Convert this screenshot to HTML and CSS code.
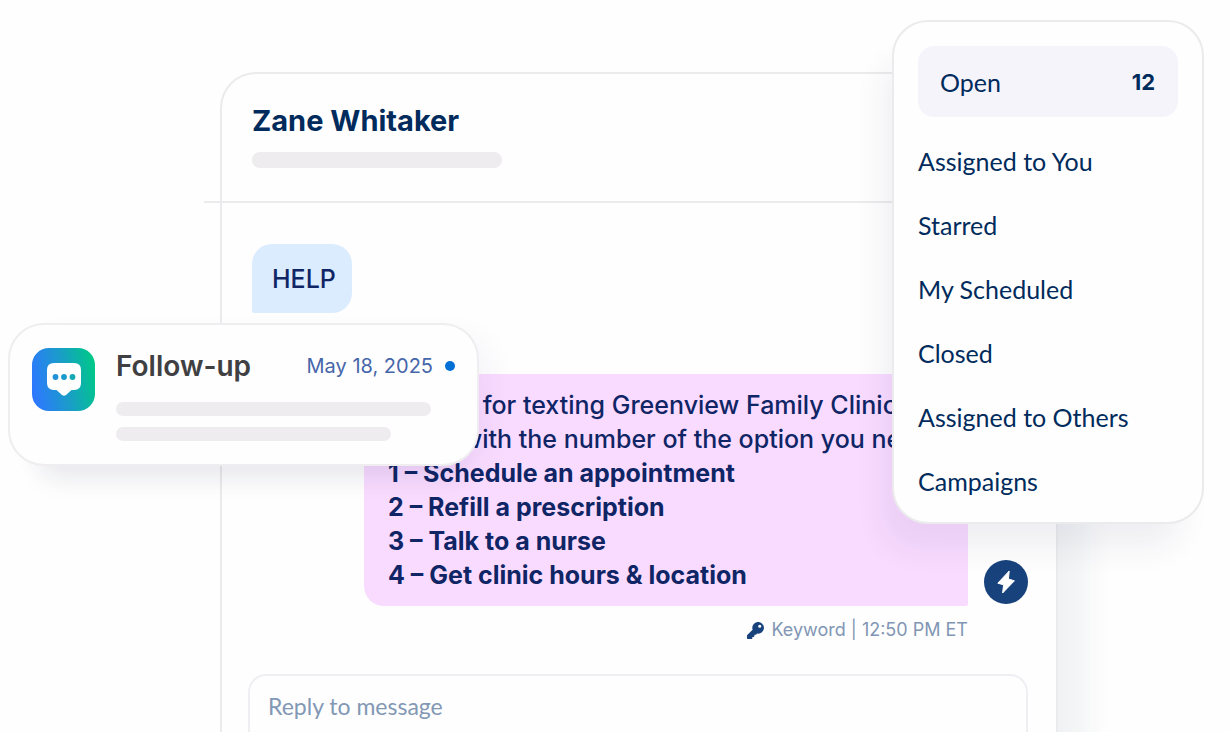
FILE: index.html
```html
<!DOCTYPE html>
<html lang="en">
<head>
    <meta charset="UTF-8">
    <meta name="viewport" content="width=device-width, initial-scale=1.0">
    <title>Zane Whitaker - Inbox</title>
    <link rel="stylesheet" href="styles.css">
</head>
<body>
    <div class="stage">
        <main class="chat">
            <header class="chat-header">
                <h1 class="chat-name">Zane Whitaker</h1>
                <div class="placeholder"></div>
            </header>

            <section class="messages">
                <p class="bubble incoming">HELP</p>

                <div class="outgoing-row">
                    <div class="bubble outgoing">
                        <p>Thanks for texting Greenview Family Clinic!</p>
                        <p>Reply with the number of the option you need:</p>
                        <p class="option">1 – Schedule an appointment</p>
                        <p class="option">2 – Refill a prescription</p>
                        <p class="option">3 – Talk to a nurse</p>
                        <p class="option">4 – Get clinic hours &amp; location</p>
                    </div>
                    <div class="avatar">
                        <svg viewBox="0 0 44 44" width="44" height="44" aria-hidden="true">
                            <path d="M25.2 11 L13.8 23.2 L19.6 24.8 L18.6 33 L30.4 20.8 L24.4 19 Z" fill="#fff" stroke="#fff" stroke-width="1" stroke-linejoin="round"/>
                        </svg>
                    </div>
                </div>

                <div class="meta">
                    <svg viewBox="0 0 512 512" width="17" height="17" aria-hidden="true">
                        <path fill="#18427c" d="M512 176a176 176 0 0 1-209 173l-24 27a24 24 0 0 1-18 8h-37v40a24 24 0 0 1-24 24h-40v40a24 24 0 0 1-24 24H24a24 24 0 0 1-24-24v-78c0-6 3-12 7-17l162-162A176 176 0 1 1 512 176zM336 128a48 48 0 1 0 96 0 48 48 0 1 0-96 0z"/>
                    </svg>
                    <span>Keyword | 12:50 PM ET</span>
                </div>
            </section>

            <textarea class="reply" placeholder="Reply to message" aria-label="Reply to message"></textarea>
        </main>

        <aside class="notice">
            <svg class="notice-icon" viewBox="0 0 63 63" width="63" height="63" aria-hidden="true">
                <defs>
                    <linearGradient id="brand" x1="0" y1="0.6" x2="1" y2="0.4">
                        <stop offset="0" stop-color="#2d78ff"/>
                        <stop offset="0.5" stop-color="#1b9bcb"/>
                        <stop offset="1" stop-color="#00c78a"/>
                    </linearGradient>
                </defs>
                <rect width="63" height="63" rx="17" fill="url(#brand)"/>
                <path d="M22 15 H42 Q49 15 49 22 V35 Q49 42 42 42 H39.5 L34 47 Q32 48.6 30 47 L24.5 42 H22 Q15 42 15 35 V22 Q15 15 22 15 Z" fill="#fff"/>
                <circle cx="23.5" cy="29" r="2.9" fill="#2191d8"/>
                <circle cx="32" cy="29" r="2.9" fill="#1b9bcb"/>
                <circle cx="40.5" cy="29" r="2.9" fill="#12a9b4"/>
            </svg>
            <div class="notice-body">
                <div class="notice-top">
                    <h2 class="notice-title">Follow-up</h2>
                    <time class="notice-date" datetime="2025-05-18">May 18, 2025</time>
                    <span class="dot"></span>
                </div>
                <div class="line line-long"></div>
                <div class="line line-short"></div>
            </div>
        </aside>

        <nav class="menu">
            <a href="#" class="menu-item active">Open <span class="count">12</span></a>
            <a href="#" class="menu-item">Assigned to You</a>
            <a href="#" class="menu-item">Starred</a>
            <a href="#" class="menu-item">My Scheduled</a>
            <a href="#" class="menu-item">Closed</a>
            <a href="#" class="menu-item">Assigned to Others</a>
            <a href="#" class="menu-item">Campaigns</a>
        </nav>
    </div>
</body>
</html>
```
FILE: styles.css
```css
* {
    box-sizing: border-box;
}

body {
    margin: 0;
    background-color: #fefefe;
    color: #0f2565;
    font-family: Inter, "Open Sans", sans-serif;
}

h1, h2, p {
    margin: 0;
}

.stage {
    position: relative;
    display: flex;
    flex-direction: column;
    min-height: 100vh;
    padding: 72px 172px 0 220px;
    overflow: hidden;
}

/* Conversation */
.chat {
    flex: 1;
    display: flex;
    flex-direction: column;
    min-width: 0;
    border: 2px solid #ebeaec;
    border-bottom: none;
    border-radius: 36px 36px 0 0;
    background-color: #fefefe;
    box-shadow: 28px 40px 32px rgba(20, 50, 60, 0.06);
}

.chat-header {
    margin-left: -18px;
    padding: 29px 48px 33px;
    border-bottom: 2px solid #ebeaec;
}

.chat-name {
    margin-bottom: 13px;
    color: #002b5c;
    font-size: 29px;
    font-weight: 700;
    line-height: 36px;
}

.placeholder {
    width: 250px;
    height: 16px;
    border-radius: 8px;
    background-color: #eeecef;
}

.messages {
    display: flex;
    flex-direction: column;
    padding: 41px 28px 32px 30px;
}

.bubble {
    font-size: 25px;
    font-weight: 500;
    line-height: 34px;
}

.incoming {
    align-self: flex-start;
    padding: 18px 16px 17px 20px;
    border-radius: 20px 20px 20px 2px;
    background-color: #dcecff;
}

.outgoing-row {
    display: flex;
    align-items: flex-end;
    gap: 16px;
    margin: 61px 0 12px 112px;
}

.outgoing {
    flex: 1;
    min-width: 0;
    padding: 14px 24px;
    border-radius: 20px 20px 2px 20px;
    background-color: #f9dbff;
    white-space: nowrap;
    overflow: hidden;
}

.option {
    font-weight: 700;
}

.avatar {
    width: 44px;
    height: 44px;
    margin-bottom: 2px;
    border-radius: 50%;
    background-color: #18427c;
}

.meta {
    display: flex;
    align-items: center;
    justify-content: flex-end;
    gap: 7px;
    padding-right: 60px;
    color: #8196b4;
    font-size: 18px;
    line-height: 24px;
}

.reply {
    flex: 1;
    min-height: 58px;
    margin: 0 28px 0 26px;
    padding: 16px 18px 0;
    border: 2px solid #f0eef2;
    border-bottom: none;
    border-radius: 18px 18px 0 0;
    background-color: #fefefe;
    color: #0f2565;
    font-family: Lato, sans-serif;
    font-size: 23px;
    line-height: 28px;
    resize: none;
    outline: none;
    overflow: hidden;
}

.reply::placeholder {
    color: #8298b4;
}

/* Follow-up notification */
.notice {
    position: absolute;
    top: 323px;
    left: 8px;
    display: flex;
    gap: 21px;
    width: 471px;
    padding: 23px 22px;
    border: 2px solid #efedef;
    border-radius: 36px;
    background-color: #fefefe;
    box-shadow: 8px 40px 24px -24px rgba(20, 40, 60, 0.06), 16px 8px 32px -8px rgba(60, 40, 120, 0.06);
}

.notice-icon {
    flex: none;
}

.notice-body {
    flex: 1;
}

.notice-top {
    display: flex;
    align-items: center;
    margin-bottom: 18px;
}

.notice-title {
    flex: 1;
    color: #404043;
    font-size: 28px;
    font-weight: 600;
    line-height: 36px;
}

.notice-date {
    color: #4666aa;
    font-size: 20px;
}

.dot {
    width: 10px;
    height: 10px;
    margin-left: 12px;
    border-radius: 50%;
    background-color: #006fd6;
}

.line {
    height: 14px;
    border-radius: 7px;
    background-color: #eeecef;
}

.line-long {
    width: 93%;
    margin-bottom: 11px;
}

.line-short {
    width: 81%;
}

/* Inbox folders */
.menu {
    position: absolute;
    top: 20px;
    right: 26px;
    width: 312px;
    padding: 24px 24px 8px;
    border: 2px solid #ebeaec;
    border-radius: 36px;
    background-color: #fefefe;
    box-shadow: -16px 32px 32px -8px rgba(40, 40, 100, 0.07);
}

.menu-item {
    display: flex;
    align-items: center;
    height: 64px;
    padding-bottom: 2px;
    color: #002b5c;
    font-family: Lato, sans-serif;
    font-size: 25px;
    text-decoration: none;
}

.menu-item.active {
    justify-content: space-between;
    height: 71px;
    margin-bottom: 13px;
    padding: 0 23px 0 22px;
    border-radius: 16px;
    background-color: #f6f4fb;
}

.count {
    font-family: Inter, sans-serif;
    font-size: 22px;
    font-weight: 700;
}
```
